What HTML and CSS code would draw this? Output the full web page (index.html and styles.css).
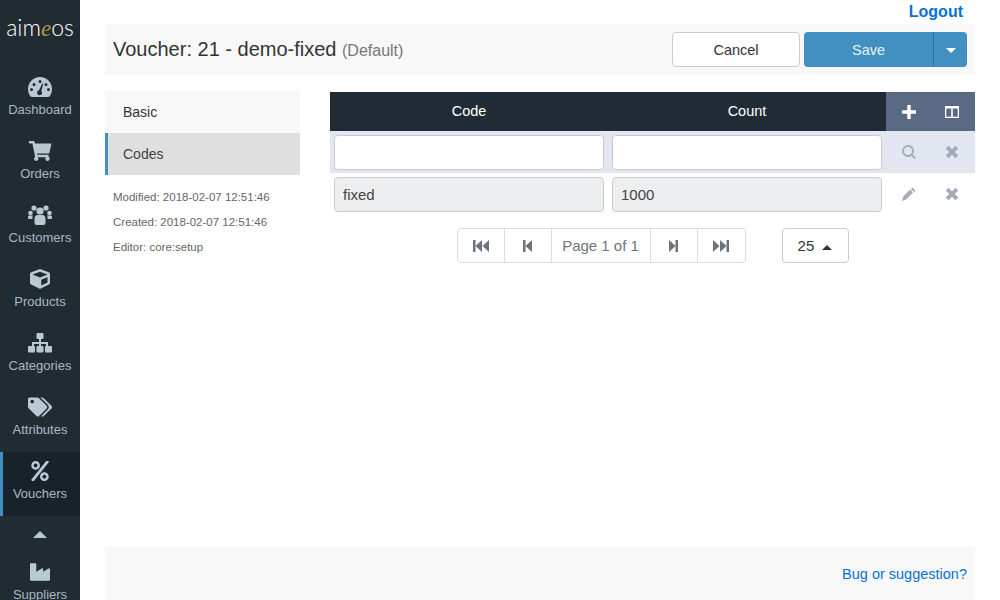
FILE: index.html
```html
<!DOCTYPE html>
<html lang="en">
<head>
  <meta charset="UTF-8">
  <title>Voucher: 21 - demo-fixed | Aimeos</title>
  <link rel="stylesheet" href="styles.css">
</head>
<body>

  <nav class="sidebar">
    <div class="logo">aim<i>e</i>os</div>

    <a class="nav-item" href="#">
      <svg class="nav-icon" viewBox="0 0 24 20"><path fill-rule="evenodd" d="M12 0C5.4 0 0 5.3 0 12c0 2.500.7 4.800 2 6.800.4.700 1.100 1.200 2 1.200h16c.9 0 1.600-.5 2-1.200 1.300-2 2-4.300 2-6.800C24 5.300 18.600 0 12 0zm0 3a1.500 1.500 0 1 1 0 3 1.500 1.500 0 0 1 0-3zM6 6a1.500 1.500 0 1 1 0 3 1.500 1.500 0 0 1 0-3zm12 0a1.500 1.500 0 1 1 0 3 1.500 1.500 0 0 1 0-3zM3.500 11a1.500 1.500 0 1 1 0 3 1.500 1.500 0 0 1 0-3zm17 0a1.500 1.500 0 1 1 0 3 1.500 1.500 0 0 1 0-3zM14.300 6.400l.9.3-1.900 7.200a2.500 2.500 0 1 1-2.300-.6z"/></svg>
      <span>Dashboard</span>
    </a>
    <a class="nav-item" href="#">
      <svg class="nav-icon" viewBox="0 0 576 512"><path d="M528.120 301.319l47.273-208C578.806 78.301 567.391 64 551.990 64H159.208l-9.166-44.810C147.758 8.021 137.930 0 126.529 0H24C10.745 0 0 10.745 0 24v16c0 13.255 10.745 24 24 24h69.883l70.248 343.435C147.325 417.100 136 435.222 136 456c0 30.928 25.072 56 56 56s56-25.072 56-56c0-15.674-6.447-29.835-16.824-40h209.647C430.447 426.165 424 440.326 424 456c0 30.928 25.072 56 56 56s56-25.072 56-56c0-22.172-12.888-41.332-31.579-50.405l5.517-24.276c3.413-15.018-8.002-29.319-23.403-29.319H218.117l-6.545-32h293.145c11.206 0 20.920-7.754 23.403-18.681z"/></svg>
      <span>Orders</span>
    </a>
    <a class="nav-item" href="#">
      <svg class="nav-icon" viewBox="0 0 24 20"><circle cx="6" cy="3" r="2.600"/><circle cx="18" cy="3" r="2.600"/><circle cx="12" cy="6" r="3.600"/><circle cx="2.500" cy="8" r="2.300"/><circle cx="21.500" cy="8" r="2.300"/><path d="M6.500 13.500c0-2.300 1.500-3.500 3-3.500h5c1.500 0 3 1.200 3 3.500V18c0 1.300-1 2-2 2h-7c-1 0-2-.7-2-2zM0 12c0-1 .6-1.500 1.500-1.500H5c-.6 1-.6 2-.6 3.500H1.500C.6 14 0 13.500 0 12.500zM24 12c0-1-.6-1.500-1.500-1.500H19c.6 1 .6 2 .6 3.500h2.900c.9 0 1.500-.5 1.500-1.500z"/></svg>
      <span>Customers</span>
    </a>
    <a class="nav-item" href="#">
      <svg class="nav-icon" viewBox="0 0 512 512"><path d="M239.100 6.300l-208 78c-18.700 7-31.100 25-31.100 45v225.100c0 18.200 10.300 34.800 26.500 42.900l208 104c13.500 6.800 29.400 6.800 42.900 0l208-104c16.300-8.100 26.500-24.800 26.500-42.900V129.300c0-20-12.400-37.900-31.100-44.900l-208-78C262 2.200 250 2.200 239.100 6.300zM256 68.400l192 72v1.100l-192 78-192-78v-1.100l192-72zm32 356V275.500l160-65v133.900l-160 80z"/></svg>
      <span>Products</span>
    </a>
    <a class="nav-item" href="#">
      <svg class="nav-icon" viewBox="0 0 24 20"><rect x="8.500" y="0" width="7" height="6" rx="1"/><rect x="11" y="6" width="2" height="8"/><path d="M4 9h16v5h-2v-3H6v3H4z"/><rect x="0" y="13" width="7" height="6.500" rx="1"/><rect x="8.500" y="13" width="7" height="6.500" rx="1"/><rect x="17" y="13" width="7" height="6.500" rx="1"/></svg>
      <span>Categories</span>
    </a>
    <a class="nav-item" href="#">
      <svg class="nav-icon" viewBox="0 0 640 512"><path d="M497.941 225.941L286.059 14.059A48 48 0 0 0 252.118 0H48C21.490 0 0 21.490 0 48v204.118a48 48 0 0 0 14.059 33.941l211.882 211.882c18.744 18.745 49.136 18.746 67.882 0l204.118-204.118c18.745-18.745 18.745-49.137 0-67.882zM112 160c-26.510 0-48-21.490-48-48s21.490-48 48-48 48 21.490 48 48-21.490 48-48 48zm513.941 133.823L421.823 497.941c-18.745 18.745-49.137 18.745-67.882 0l-.36-.36L527.640 323.522c16.999-16.999 26.360-39.600 26.360-63.640s-9.362-46.641-26.360-63.640L331.397 0h48.721a48 48 0 0 1 33.941 14.059l211.882 211.882c18.745 18.745 18.745 49.137 0 67.882z"/></svg>
      <span>Attributes</span>
    </a>
    <a class="nav-item active" href="#">
      <svg class="nav-icon" viewBox="0 0 448 512"><path d="M112 224c61.900 0 112-50.100 112-112S173.900 0 112 0 0 50.100 0 112s50.100 112 112 112zm0-160c26.500 0 48 21.500 48 48s-21.500 48-48 48-48-21.500-48-48 21.500-48 48-48zm224 224c-61.900 0-112 50.100-112 112s50.100 112 112 112 112-50.100 112-112-50.100-112-112-112zm0 160c-26.500 0-48-21.500-48-48s21.500-48 48-48 48 21.500 48 48-21.500 48-48 48zM392.300.2l31.600.1c19.400.1 30.900 21.800 20 37.800L77.400 501.600a23.950 23.950 0 0 1-20 10.200l-33.400-.1c-19.500 0-30.900-21.900-19.700-37.800l368-463.700C377.200 4 384.500.2 392.300.2z"/></svg>
      <span>Vouchers</span>
    </a>
    <div class="nav-more"><span class="caret-up light"></span></div>
    <a class="nav-item" href="#">
      <svg class="nav-icon" viewBox="0 0 512 512"><path d="M475.115 163.781L336 252.309v-68.280c0-18.916-20.931-30.399-36.885-20.248L160 252.309V56c0-13.255-10.745-24-24-24H24C10.745 32 0 42.745 0 56v400c0 13.255 10.745 24 24 24h464c13.255 0 24-10.745 24-24V184.029c0-18.917-20.931-30.399-36.885-20.248z"/></svg>
      <span>Suppliers</span>
    </a>
  </nav>

  <div class="main">
    <div class="topbar"><a class="logout" href="#">Logout</a></div>

    <header class="item-header">
      <h1>Voucher: 21 - demo-fixed <small>(Default)</small></h1>
      <div class="actions">
        <button class="btn btn-cancel" type="button">Cancel</button>
        <div class="btn-group">
          <button class="btn btn-save" type="button">Save</button>
          <button class="btn btn-toggle" type="button"><span class="caret-down"></span></button>
        </div>
      </div>
    </header>

    <div class="content">
      <aside class="item-nav">
        <ul class="tabs">
          <li class="tab">Basic</li>
          <li class="tab active">Codes</li>
        </ul>
        <div class="meta">
          <p>Modified: 2018-02-07 12:51:46</p>
          <p>Created: 2018-02-07 12:51:46</p>
          <p>Editor: core:setup</p>
        </div>
      </aside>

      <section class="codes">
        <div class="row row-head">
          <div class="cell head-cell">Code</div>
          <div class="cell head-cell">Count</div>
          <div class="cell-actions head-actions">
            <svg class="act-icon" viewBox="0 0 12 12"><path fill="#fff" d="M4.500 0h3v4.500H12v3H7.500V12h-3V7.500H0v-3h4.500z"/></svg>
            <svg class="act-icon" viewBox="0 0 14 12"><path fill="#fff" fill-rule="evenodd" d="M0 0h14v12H0zm1.300 2.500v8.200h4.900V2.500zm6.500 0v8.200h4.900V2.500z"/></svg>
          </div>
        </div>
        <div class="row row-filter">
          <div class="cell"><input class="field" type="text"></div>
          <div class="cell"><input class="field" type="text"></div>
          <div class="cell-actions">
            <svg class="act-icon" viewBox="0 0 14 14"><path fill-rule="evenodd" d="M6 0a6 6 0 0 1 4.800 9.600l3 3-1.400 1.400-3-3A6 6 0 1 1 6 0zm0 2a4 4 0 1 0 0 8 4 4 0 0 0 0-8z"/></svg>
            <svg class="act-icon" viewBox="0 0 12 12"><path d="M3 .6L6 3.600 9 .6 11.400 3 8.400 6l3 3L9 11.400l-3-3-3 3L.6 9l3-3-3-3z"/></svg>
          </div>
        </div>
        <div class="row">
          <div class="cell"><input class="field" type="text" value="fixed" readonly></div>
          <div class="cell"><input class="field" type="text" value="1000" readonly></div>
          <div class="cell-actions">
            <svg class="act-icon" viewBox="0 0 14 14"><path d="M10.500.5l3 3-1.500 1.500-3-3zM8 2.500l3 3-7 7L0 14l1-4z"/></svg>
            <svg class="act-icon" viewBox="0 0 12 12"><path d="M3 .6L6 3.600 9 .6 11.400 3 8.400 6l3 3L9 11.400l-3-3-3 3L.6 9l3-3-3-3z"/></svg>
          </div>
        </div>

        <div class="pager">
          <div class="pages">
            <a class="page-btn" href="#"><svg class="page-icon wide" viewBox="0 0 16 12"><path d="M0 0h2.500v12H0zM9 0v12L2.500 6zM16 0v12L9.500 6z"/></svg></a>
            <a class="page-btn" href="#"><svg class="page-icon" viewBox="0 0 9 12"><path d="M0 0h2.500v12H0zM9 0v12L2.500 6z"/></svg></a>
            <span class="page-label">Page 1 of 1</span>
            <a class="page-btn" href="#"><svg class="page-icon" viewBox="0 0 9 12"><path d="M9 0H6.500v12H9zM0 0v12l6.500-6z"/></svg></a>
            <a class="page-btn" href="#"><svg class="page-icon wide" viewBox="0 0 16 12"><path d="M16 0h-2.500v12H16zM7 0v12l6.500-6zM0 0v12l6.500-6z"/></svg></a>
          </div>
          <button class="page-size" type="button">25 <span class="caret-up"></span></button>
        </div>
      </section>
    </div>

    <footer class="item-footer"><a href="#">Bug or suggestion?</a></footer>
  </div>

</body>
</html>
```

FILE: styles.css
```css
* {
  box-sizing: border-box;
}

html, body {
  height: 100%;
  overflow: hidden;
}

body {
  margin: 0;
  display: flex;
  font-family: "Liberation Sans", Arial, sans-serif;
  font-size: 15px;
  color: #333;
  background: #fff;
}

a {
  text-decoration: none;
}

/* sidebar */
.sidebar {
  flex: 0 0 80px;
  height: 100vh;
  overflow: hidden;
  background: #212b32;
}

.logo {
  height: 68px;
  padding-top: 13px;
  text-align: center;
  font-family: Lato, sans-serif;
  font-weight: 300;
  font-size: 23px;
  line-height: 28px;
  color: #fff;
}

.logo i {
  font-family: "Liberation Serif", serif;
  color: #b8954e;
}

.nav-item {
  display: flex;
  flex-direction: column;
  align-items: center;
  height: 64px;
  padding-top: 9px;
  color: #a9b8c1;
  font-size: 13px;
  border-left: 3px solid transparent;
  margin: 0;
}

.nav-item span {
  margin-left: -3px;
  margin-top: 4px;
  line-height: 18px;
}

.nav-icon {
  display: block;
  width: 24px;
  height: 20px;
  margin-left: -3px;
  fill: #b9c9d2;
}

.nav-item.active {
  background: #19222a;
  border-left-color: #3f8fc0;
}

.nav-more {
  display: flex;
  justify-content: center;
  height: 46px;
  padding-top: 15px;
}

.nav-more + .nav-item {
  padding-top: 0;
}

/* carets */
.caret-up, .caret-down {
  display: inline-block;
  width: 0;
  height: 0;
  border-left: 5px solid transparent;
  border-right: 5px solid transparent;
  vertical-align: middle;
}

.caret-up {
  border-bottom: 5px solid #333;
}

.caret-up.light {
  border-left-width: 7px;
  border-right-width: 7px;
  border-bottom: 7px solid #b9c9d2;
}

.caret-down {
  border-top: 5px solid #fff;
}

/* main column */
.main {
  flex: 1;
  display: flex;
  flex-direction: column;
  height: 100vh;
  padding: 0 25px;
}

.topbar {
  display: flex;
  justify-content: flex-end;
  height: 24px;
  padding-right: 12px;
}

.logout {
  color: #0a70d6;
  font-weight: bold;
  font-size: 16px;
  line-height: 24px;
}

.item-header {
  display: flex;
  justify-content: space-between;
  align-items: center;
  height: 51px;
  padding: 0 8px;
  background: #f8f8f8;
}

h1 {
  margin: 0;
  font-size: 20px;
  font-weight: normal;
  color: #333;
}

h1 small {
  font-size: 16px;
  color: #777;
}

.actions {
  display: flex;
  gap: 4px;
}

.btn {
  height: 35px;
  border: 1px solid #ccc;
  border-radius: 4px;
  font-family: inherit;
  font-size: 14.500px;
  color: #333;
  background: #fff;
}

.btn-cancel {
  width: 128px;
}

.btn-group {
  display: flex;
}

.btn-save {
  width: 129px;
  color: #e8f0f6;
  background: #4190c1;
  border: none;
  border-radius: 4px 0 0 4px;
}

.btn-toggle {
  width: 34px;
  background: #4190c1;
  border: none;
  border-left: 1px solid #2d6f9c;
  border-radius: 0 4px 4px 0;
}

/* left tabs */
.content {
  flex: 1;
  display: flex;
  gap: 30px;
  padding-top: 16px;
}

.item-nav {
  flex: 0 0 195px;
}

.tabs {
  list-style: none;
  margin: 0;
  padding: 0;
}

.tab {
  height: 42px;
  padding-left: 18px;
  line-height: 42px;
  font-size: 14px;
  background: #f8f8f8;
}

.tab.active {
  padding-left: 15px;
  color: #444;
  background: #dfdfdf;
  border-left: 3px solid #3f8fc0;
}

.meta {
  padding: 15px 8px;
  font-size: 11.500px;
  color: #666;
}

.meta p {
  margin: 0 0 11px;
  line-height: 14px;
}

/* codes table */
.codes {
  flex: 1;
  padding-top: 1px;
}

.row {
  display: flex;
  height: 42px;
}

.cell {
  flex: 0 0 278px;
  padding: 4px;
}

.cell-actions {
  flex: 1;
  display: flex;
  justify-content: space-around;
  align-items: center;
  padding: 0 2px;
}

.act-icon {
  width: 14px;
  height: 14px;
  fill: #a5abb8;
}

.row-head {
  height: 39px;
  color: #fff;
  background: #212b35;
}

.head-cell {
  padding: 0;
  line-height: 39px;
  text-align: center;
  font-size: 14.500px;
}

.head-actions {
  background: #5a6a85;
}

.row-filter {
  background: #e2e6f1;
}

.field {
  display: block;
  width: 270px;
  height: 35px;
  padding: 0 8px;
  border: 1px solid #ccc;
  border-radius: 4px;
  font-family: inherit;
  font-size: 15px;
  color: #444;
  background: #fff;
}

.field[readonly] {
  background: #eceeef;
}

/* pagination */
.pager {
  display: flex;
  justify-content: center;
  gap: 36px;
  padding-top: 13px;
}

.pages {
  display: flex;
  height: 35px;
  border: 1px solid #ddd;
  border-radius: 4px;
}

.page-btn {
  display: flex;
  justify-content: center;
  align-items: center;
  width: 47px;
  border-right: 1px solid #ddd;
}

.page-btn:last-child {
  border-right: none;
}

.page-icon {
  width: 9px;
  height: 12px;
  fill: #6c757d;
}

.page-icon.wide {
  width: 16px;
}

.page-label {
  width: 99px;
  border-right: 1px solid #ddd;
  line-height: 33px;
  text-align: center;
  color: #6c757d;
}

.page-size {
  width: 67px;
  height: 35px;
  border: 1px solid #ccc;
  border-radius: 4px;
  font-family: inherit;
  font-size: 15px;
  color: #333;
  background: #fff;
}

.page-size .caret-up {
  margin-left: 4px;
}

/* footer */
.item-footer {
  display: flex;
  justify-content: flex-end;
  align-items: center;
  height: 53px;
  padding-right: 8px;
  background: #f8f8f8;
}

.item-footer a {
  color: #0a70d6;
  font-size: 14.500px;
}
```
